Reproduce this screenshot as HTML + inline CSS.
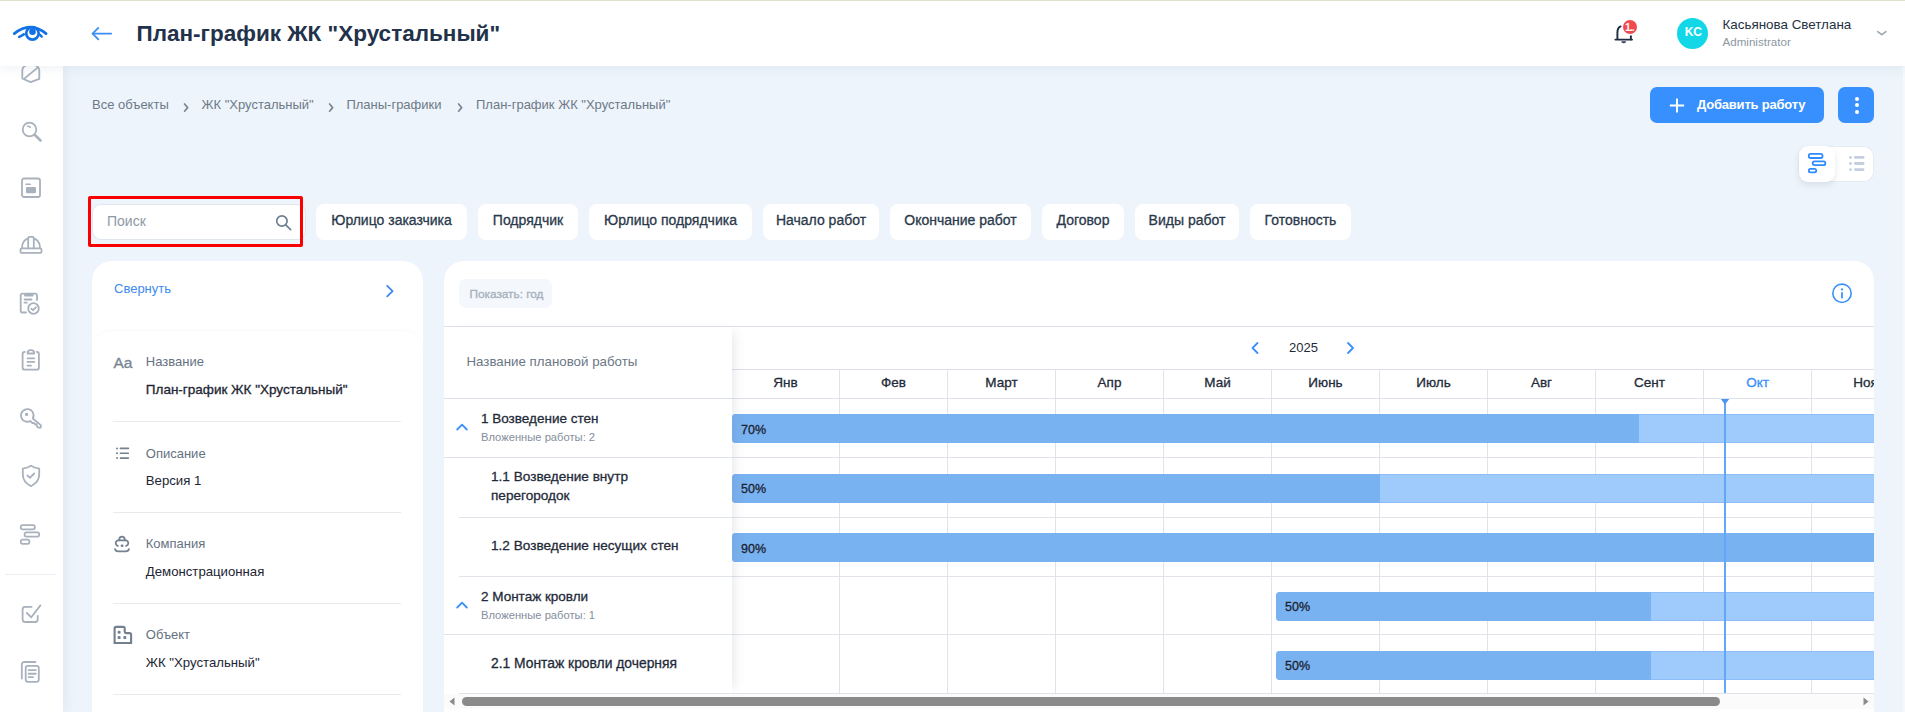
<!DOCTYPE html>
<html><head><meta charset="utf-8"><title>План-график</title>
<style>
*{box-sizing:border-box;margin:0;padding:0;}
html,body{width:1905px;height:712px;overflow:hidden;}
body{background:#edf4fb;font-family:"Liberation Sans",sans-serif;position:relative;}
.t{position:absolute;white-space:nowrap;line-height:1;}
.r{position:absolute;}
svg.r{overflow:visible;}
</style></head><body>
<div class="t" style="left:92.00px;top:97.90px;font-size:13px;color:#6e7a88;font-weight:normal;">Все объекты</div>
<div class="t" style="left:201.50px;top:97.90px;font-size:13px;color:#6e7a88;font-weight:normal;">ЖК "Хрустальный"</div>
<div class="t" style="left:346.40px;top:97.90px;font-size:13px;color:#6e7a88;font-weight:normal;">Планы-графики</div>
<div class="t" style="left:476.00px;top:97.90px;font-size:13px;color:#6e7a88;font-weight:normal;">План-график ЖК "Хрустальный"</div>
<svg class="r" style="left:183px;top:101px;" width="7" height="11" viewBox="0 0 7 11"><polyline points="1.6,3 4.6,6.6 1.6,10.2" fill="none" stroke="#7b8796" stroke-width="1.7" stroke-linecap="round" stroke-linejoin="round"/></svg>
<svg class="r" style="left:328px;top:101px;" width="7" height="11" viewBox="0 0 7 11"><polyline points="1.6,3 4.6,6.6 1.6,10.2" fill="none" stroke="#7b8796" stroke-width="1.7" stroke-linecap="round" stroke-linejoin="round"/></svg>
<svg class="r" style="left:457px;top:101px;" width="7" height="11" viewBox="0 0 7 11"><polyline points="1.6,3 4.6,6.6 1.6,10.2" fill="none" stroke="#7b8796" stroke-width="1.7" stroke-linecap="round" stroke-linejoin="round"/></svg>
<div class="r" style="left:1650px;top:87px;width:174px;height:36px;background:#388ffe;border-radius:7px;"></div>
<svg class="r" style="left:1669px;top:98px;" width="16" height="15" viewBox="0 0 16 15"><path d="M8 0.5V14.5M0.9 7.5H15.1" stroke="#fff" stroke-width="1.9" fill="none"/></svg>
<div class="t" style="left:1697.00px;top:97.70px;font-size:13px;color:#fff;font-weight:bold;letter-spacing:-0.2px;">Добавить работу</div>
<div class="r" style="left:1838px;top:87px;width:36px;height:36px;background:#388ffe;border-radius:7px;"></div>
<div class="r" style="left:1854.6000000000001px;top:96.9px;width:4.2px;height:4.2px;border-radius:50%;background:#fff"></div>
<div class="r" style="left:1854.6000000000001px;top:103.2px;width:4.2px;height:4.2px;border-radius:50%;background:#fff"></div>
<div class="r" style="left:1854.6000000000001px;top:109.5px;width:4.2px;height:4.2px;border-radius:50%;background:#fff"></div>
<div class="r" style="left:1799px;top:147px;width:74px;height:34px;background:#fff;border-radius:9px;box-shadow:0 0 0 1px rgba(225,230,238,0.6);"></div>
<div class="r" style="left:1799px;top:146px;width:36px;height:36px;background:#fff;border-radius:9px;box-shadow:0 3px 6px rgba(120,130,150,0.18);"></div>
<svg class="r" style="left:1805px;top:150px;" width="25" height="26" viewBox="0 0 25 26"><g fill="none" stroke="#2f8bff" stroke-width="1.8"><rect x="3.8" y="3.9" width="13.7" height="4.1" rx="1.8"/><rect x="7.7" y="11.4" width="12.6" height="3.8" rx="1.7"/><rect x="3.8" y="18.9" width="7.4" height="3.4" rx="1.6"/></g></svg>
<svg class="r" style="left:1846px;top:152px;" width="22" height="22" viewBox="0 0 22 22"><g fill="#c3cfdf"><circle cx="4.5" cy="5.4" r="1.4"/><circle cx="4.5" cy="11.5" r="1.4"/><circle cx="4.5" cy="17.6" r="1.4"/><rect x="8" y="4" width="10.5" height="2.8" rx="1.4"/><rect x="8" y="10.1" width="10.5" height="2.8" rx="1.4"/><rect x="8" y="16.2" width="10.5" height="2.8" rx="1.4"/></g></svg>
<div class="r" style="left:93px;top:205px;width:212px;height:34px;background:#fff;border-radius:8px;box-shadow:0 0 0 1px rgba(215,220,226,0.6);"></div>
<div class="t" style="left:107.00px;top:214.15px;font-size:14px;color:#8d98a5;font-weight:normal;">Поиск</div>
<svg class="r" style="left:268px;top:205px;" width="30" height="30" viewBox="0 0 30 30"><circle cx="13.9" cy="16" r="5.2" fill="none" stroke="#6d7f92" stroke-width="1.7"/><path d="M17.7 19.8L22.6 24.6" stroke="#6d7f92" stroke-width="1.7" stroke-linecap="round"/></svg>
<div class="r" style="left:88px;top:196px;width:215px;height:51px;border:3px solid #fb0000;border-radius:2px;"></div>
<div class="r" style="left:316px;top:204px;width:151px;height:36px;background:#fff;border-radius:8px;"></div>
<div class="t" style="left:241.50px;width:300px;text-align:center;top:213.35px;font-size:14px;color:#2b394b;font-weight:normal;-webkit-text-stroke:0.3px currentColor;">Юрлицо заказчика</div>
<div class="r" style="left:478px;top:204px;width:100px;height:36px;background:#fff;border-radius:8px;"></div>
<div class="t" style="left:378.00px;width:300px;text-align:center;top:213.35px;font-size:14px;color:#2b394b;font-weight:normal;-webkit-text-stroke:0.3px currentColor;">Подрядчик</div>
<div class="r" style="left:589px;top:204px;width:163px;height:36px;background:#fff;border-radius:8px;"></div>
<div class="t" style="left:520.50px;width:300px;text-align:center;top:213.35px;font-size:14px;color:#2b394b;font-weight:normal;-webkit-text-stroke:0.3px currentColor;">Юрлицо подрядчика</div>
<div class="r" style="left:763px;top:204px;width:116px;height:36px;background:#fff;border-radius:8px;"></div>
<div class="t" style="left:671.00px;width:300px;text-align:center;top:213.35px;font-size:14px;color:#2b394b;font-weight:normal;-webkit-text-stroke:0.3px currentColor;">Начало работ</div>
<div class="r" style="left:890px;top:204px;width:141px;height:36px;background:#fff;border-radius:8px;"></div>
<div class="t" style="left:810.50px;width:300px;text-align:center;top:213.35px;font-size:14px;color:#2b394b;font-weight:normal;-webkit-text-stroke:0.3px currentColor;">Окончание работ</div>
<div class="r" style="left:1042px;top:204px;width:82px;height:36px;background:#fff;border-radius:8px;"></div>
<div class="t" style="left:933.00px;width:300px;text-align:center;top:213.35px;font-size:14px;color:#2b394b;font-weight:normal;-webkit-text-stroke:0.3px currentColor;">Договор</div>
<div class="r" style="left:1135px;top:204px;width:104px;height:36px;background:#fff;border-radius:8px;"></div>
<div class="t" style="left:1037.00px;width:300px;text-align:center;top:213.35px;font-size:14px;color:#2b394b;font-weight:normal;-webkit-text-stroke:0.3px currentColor;">Виды работ</div>
<div class="r" style="left:1250px;top:204px;width:101px;height:36px;background:#fff;border-radius:8px;"></div>
<div class="t" style="left:1150.50px;width:300px;text-align:center;top:213.35px;font-size:14px;color:#2b394b;font-weight:normal;-webkit-text-stroke:0.3px currentColor;">Готовность</div>
<div class="r" style="left:92px;top:261px;width:331px;height:460px;background:#fff;border-radius:20px;"></div>
<div class="r" style="left:92px;top:331px;width:331px;height:400px;background:#fff;border-radius:20px 20px 0 0;box-shadow:0 -1px 2px rgba(150,160,180,0.05);"></div>
<div class="t" style="left:114.00px;top:282.20px;font-size:13px;color:#3d8af0;font-weight:normal;">Свернуть</div>
<svg class="r" style="left:383px;top:283px;" width="14" height="16" viewBox="0 0 14 16"><polyline points="4.2,2.8 9.6,8.1 4.2,13.4" fill="none" stroke="#3d8af0" stroke-width="1.8" stroke-linecap="round" stroke-linejoin="round"/></svg>
<div class="t" style="left:113.50px;top:354.78px;font-size:15.5px;color:#7a8794;font-weight:normal;-webkit-text-stroke:0.35px currentColor;">Aa</div>
<div class="t" style="left:145.80px;top:355.30px;font-size:13px;color:#657181;font-weight:normal;">Название</div>
<div class="t" style="left:145.80px;top:382.57px;font-size:13.5px;color:#1c2533;font-weight:normal;-webkit-text-stroke:0.3px currentColor;">План-график ЖК "Хрустальный"</div>
<div class="t" style="left:145.80px;top:446.50px;font-size:13px;color:#657181;font-weight:normal;">Описание</div>
<div class="t" style="left:145.80px;top:473.83px;font-size:13.2px;color:#1c2533;font-weight:normal;">Версия 1</div>
<div class="t" style="left:145.80px;top:537.30px;font-size:13px;color:#657181;font-weight:normal;">Компания</div>
<div class="t" style="left:145.80px;top:564.83px;font-size:13.2px;color:#1c2533;font-weight:normal;">Демонстрационная</div>
<div class="t" style="left:145.80px;top:628.20px;font-size:13px;color:#657181;font-weight:normal;">Объект</div>
<div class="t" style="left:145.80px;top:655.83px;font-size:13.2px;color:#1c2533;font-weight:normal;">ЖК "Хрустальный"</div>
<div class="r" style="left:113px;top:421px;width:288px;height:1px;background:#e8eaed;"></div>
<div class="r" style="left:113px;top:512px;width:288px;height:1px;background:#e8eaed;"></div>
<div class="r" style="left:113px;top:603px;width:288px;height:1px;background:#e8eaed;"></div>
<div class="r" style="left:113px;top:694px;width:288px;height:1px;background:#e8eaed;"></div>
<svg class="r" style="left:114px;top:445px;" width="18" height="16" viewBox="0 0 18 16"><g fill="#73808e"><circle cx="3" cy="3.5" r="1"/><circle cx="3" cy="8.3" r="1"/><circle cx="3" cy="13.1" r="1"/><rect x="5.6" y="2.6" width="9.6" height="1.7" rx=".8"/><rect x="5.6" y="7.4" width="9.6" height="1.7" rx=".8"/><rect x="5.6" y="12.2" width="9.6" height="1.7" rx=".8"/></g></svg>
<svg class="r" style="left:112px;top:534px;" width="20" height="20" viewBox="0 0 20 20"><g fill="none" stroke="#73808e" stroke-width="1.8" stroke-linecap="round"><path d="M7.3 6.3V5.4a2.7 2.7 0 0 1 5.4 0v0.9"/><path d="M5.9 11.9H5.6a3 3 0 0 1 0-5.6h8.8a3 3 0 0 1 0 5.6h-0.3"/><path d="M3 15.1Q3.6 17.4 6.2 17.4H13.8Q16.4 17.4 17 15.1"/></g><rect x="8.7" y="10.5" width="2.8" height="2.6" rx="1" fill="#73808e"/></svg>
<svg class="r" style="left:112px;top:624px;" width="22" height="22" viewBox="0 0 22 22"><g fill="none" stroke="#73808e" stroke-width="2.1"><path d="M2.6 19V4.4a1.5 1.5 0 0 1 1.5-1.5h7.1a1.5 1.5 0 0 1 1.5 1.5v3.4a1.3 1.3 0 0 0 1.3 1.3h3.6a1.5 1.5 0 0 1 1.5 1.5V19z"/></g><g fill="#73808e"><rect x="5.6" y="6.7" width="3" height="3" rx="1.2"/><rect x="5.6" y="12.1" width="3" height="3" rx="1.2"/><rect x="11.3" y="12.1" width="3" height="3" rx="1.2"/></g></svg>
<div class="r" style="left:444px;top:261px;width:1430px;height:460px;background:#fff;border-radius:20px 20px 0 0;"></div>
<div class="r" style="left:459px;top:279px;width:93px;height:29px;background:#f4f8fc;border-radius:7px;"></div>
<div class="t" style="left:469.50px;top:288.51px;font-size:11.8px;color:#a8b1bc;font-weight:normal;-webkit-text-stroke:0.35px currentColor;">Показать: год</div>
<svg class="r" style="left:1830px;top:281px;" width="25" height="25" viewBox="0 0 25 25"><circle cx="12" cy="12.3" r="9.2" fill="none" stroke="#3990fc" stroke-width="1.6"/><circle cx="12" cy="8.4" r="1.1" fill="#3990fc"/><path d="M12 11.2V17.2" stroke="#3990fc" stroke-width="1.8"/></svg>
<div class="r" style="left:444px;top:326px;width:1430px;height:1px;background:#dde2ea;"></div>
<div class="t" style="left:1289.00px;top:340.80px;font-size:13px;color:#1f2b3a;font-weight:normal;">2025</div>
<svg class="r" style="left:1248px;top:340px;" width="14" height="16" viewBox="0 0 14 16"><polyline points="9.5,3 4.5,8 9.5,13" fill="none" stroke="#3990fc" stroke-width="1.8" stroke-linecap="round" stroke-linejoin="round"/></svg>
<svg class="r" style="left:1344px;top:340px;" width="14" height="16" viewBox="0 0 14 16"><polyline points="4,3 9,8 4,13" fill="none" stroke="#3990fc" stroke-width="1.8" stroke-linecap="round" stroke-linejoin="round"/></svg>
<div class="r" style="left:732px;top:369px;width:1142px;height:1px;background:#dde0e8;"></div>
<div class="r" style="left:839px;top:369px;width:1px;height:325px;background:#e1e3ea;"></div>
<div class="r" style="left:947px;top:369px;width:1px;height:325px;background:#e1e3ea;"></div>
<div class="r" style="left:1055px;top:369px;width:1px;height:325px;background:#e1e3ea;"></div>
<div class="r" style="left:1163px;top:369px;width:1px;height:325px;background:#e1e3ea;"></div>
<div class="r" style="left:1271px;top:369px;width:1px;height:325px;background:#e1e3ea;"></div>
<div class="r" style="left:1379px;top:369px;width:1px;height:325px;background:#e1e3ea;"></div>
<div class="r" style="left:1487px;top:369px;width:1px;height:325px;background:#e1e3ea;"></div>
<div class="r" style="left:1595px;top:369px;width:1px;height:325px;background:#e1e3ea;"></div>
<div class="r" style="left:1703px;top:369px;width:1px;height:325px;background:#e1e3ea;"></div>
<div class="r" style="left:1811px;top:369px;width:1px;height:325px;background:#e1e3ea;"></div>
<div class="t" style="left:735.50px;width:100px;text-align:center;top:375.87px;font-size:13.5px;color:#1f2b3a;font-weight:normal;-webkit-text-stroke:0.3px currentColor;">Янв</div>
<div class="t" style="left:843.50px;width:100px;text-align:center;top:375.87px;font-size:13.5px;color:#1f2b3a;font-weight:normal;-webkit-text-stroke:0.3px currentColor;">Фев</div>
<div class="t" style="left:951.50px;width:100px;text-align:center;top:375.87px;font-size:13.5px;color:#1f2b3a;font-weight:normal;-webkit-text-stroke:0.3px currentColor;">Март</div>
<div class="t" style="left:1059.50px;width:100px;text-align:center;top:375.87px;font-size:13.5px;color:#1f2b3a;font-weight:normal;-webkit-text-stroke:0.3px currentColor;">Апр</div>
<div class="t" style="left:1167.50px;width:100px;text-align:center;top:375.87px;font-size:13.5px;color:#1f2b3a;font-weight:normal;-webkit-text-stroke:0.3px currentColor;">Май</div>
<div class="t" style="left:1275.50px;width:100px;text-align:center;top:375.87px;font-size:13.5px;color:#1f2b3a;font-weight:normal;-webkit-text-stroke:0.3px currentColor;">Июнь</div>
<div class="t" style="left:1383.50px;width:100px;text-align:center;top:375.87px;font-size:13.5px;color:#1f2b3a;font-weight:normal;-webkit-text-stroke:0.3px currentColor;">Июль</div>
<div class="t" style="left:1491.50px;width:100px;text-align:center;top:375.87px;font-size:13.5px;color:#1f2b3a;font-weight:normal;-webkit-text-stroke:0.3px currentColor;">Авг</div>
<div class="t" style="left:1599.50px;width:100px;text-align:center;top:375.87px;font-size:13.5px;color:#1f2b3a;font-weight:normal;-webkit-text-stroke:0.3px currentColor;">Сент</div>
<div class="t" style="left:1707.50px;width:100px;text-align:center;top:375.87px;font-size:13.5px;color:#3990fc;font-weight:normal;-webkit-text-stroke:0.3px currentColor;">Окт</div>
<div class="t" style="left:1815.50px;width:100px;text-align:center;top:375.87px;font-size:13.5px;color:#1f2b3a;font-weight:normal;-webkit-text-stroke:0.3px currentColor;">Ноя</div>
<div class="r" style="left:732px;top:398px;width:1142px;height:1px;background:#e1e3ea;"></div>
<div class="r" style="left:732px;top:457px;width:1142px;height:1px;background:#e1e3ea;"></div>
<div class="r" style="left:732px;top:517px;width:1142px;height:1px;background:#e1e3ea;"></div>
<div class="r" style="left:732px;top:576px;width:1142px;height:1px;background:#e1e3ea;"></div>
<div class="r" style="left:732px;top:634px;width:1142px;height:1px;background:#e1e3ea;"></div>
<div class="r" style="left:732px;top:693px;width:1142px;height:1px;background:#e1e3ea;"></div>
<div class="r" style="left:732px;top:414px;width:1142px;height:29px;background:#9fcbfc;border-radius:4px 0 0 4px;border-top:1px solid #8dbdf6;border-bottom:1px solid #8dbdf6;"></div>
<div class="r" style="left:732px;top:414px;width:907px;height:29px;background:#79b2f0;border-radius:4px 0 0 4px;"></div>
<div class="t" style="left:741.00px;top:423.82px;font-size:12.5px;color:#1c2230;font-weight:normal;-webkit-text-stroke:0.3px currentColor;">70%</div>
<div class="r" style="left:732px;top:474px;width:1142px;height:29px;background:#9fcbfc;border-radius:4px 0 0 4px;border-top:1px solid #8dbdf6;border-bottom:1px solid #8dbdf6;"></div>
<div class="r" style="left:732px;top:474px;width:647.5px;height:29px;background:#79b2f0;border-radius:4px 0 0 4px;"></div>
<div class="t" style="left:741.00px;top:482.82px;font-size:12.5px;color:#1c2230;font-weight:normal;-webkit-text-stroke:0.3px currentColor;">50%</div>
<div class="r" style="left:732px;top:533px;width:1142px;height:29px;background:#9fcbfc;border-radius:4px 0 0 4px;border-top:1px solid #8dbdf6;border-bottom:1px solid #8dbdf6;"></div>
<div class="r" style="left:732px;top:533px;width:1142px;height:29px;background:#79b2f0;border-radius:4px 0 0 4px;"></div>
<div class="t" style="left:741.00px;top:542.82px;font-size:12.5px;color:#1c2230;font-weight:normal;-webkit-text-stroke:0.3px currentColor;">90%</div>
<div class="r" style="left:1276px;top:592px;width:598px;height:29px;background:#9fcbfc;border-radius:4px 0 0 4px;border-top:1px solid #8dbdf6;border-bottom:1px solid #8dbdf6;"></div>
<div class="r" style="left:1276px;top:592px;width:375px;height:29px;background:#79b2f0;border-radius:4px 0 0 4px;"></div>
<div class="t" style="left:1285.00px;top:600.82px;font-size:12.5px;color:#1c2230;font-weight:normal;-webkit-text-stroke:0.3px currentColor;">50%</div>
<div class="r" style="left:1276px;top:651px;width:598px;height:29px;background:#9fcbfc;border-radius:4px 0 0 4px;border-top:1px solid #8dbdf6;border-bottom:1px solid #8dbdf6;"></div>
<div class="r" style="left:1276px;top:651px;width:375px;height:29px;background:#79b2f0;border-radius:4px 0 0 4px;"></div>
<div class="t" style="left:1285.00px;top:659.82px;font-size:12.5px;color:#1c2230;font-weight:normal;-webkit-text-stroke:0.3px currentColor;">50%</div>
<div class="r" style="left:1724px;top:400px;width:2px;height:293px;background:#62a6f8;"></div>
<svg class="r" style="left:1720px;top:398px;" width="10" height="7" viewBox="0 0 10 7"><polygon points="0.8,1 9.2,1 5,6.5" fill="#4a94f4"/></svg>
<div class="r" style="left:444px;top:327px;width:288px;height:366px;background:#fff;box-shadow:7px 0 10px -5px rgba(100,110,140,0.16);"></div>
<div class="r" style="left:444px;top:398px;width:288px;height:1px;background:#dde0e8;"></div>
<div class="t" style="left:466.50px;top:354.74px;font-size:13.3px;color:#6b7785;font-weight:normal;">Название плановой работы</div>
<div class="r" style="left:444px;top:457px;width:288px;height:1px;background:#e1e3ea;"></div>
<div class="r" style="left:459px;top:517px;width:273px;height:1px;background:#e1e3ea;"></div>
<div class="r" style="left:459px;top:576px;width:273px;height:1px;background:#e1e3ea;"></div>
<div class="r" style="left:444px;top:634px;width:288px;height:1px;background:#e1e3ea;"></div>
<div class="r" style="left:459px;top:693px;width:273px;height:1px;background:#e1e3ea;"></div>
<svg class="r" style="left:455px;top:422px;" width="14" height="10" viewBox="0 0 14 10"><polyline points="2.2,7.5 7,2.7 11.8,7.5" fill="none" stroke="#3990fc" stroke-width="1.8" stroke-linecap="round" stroke-linejoin="round"/></svg>
<div class="t" style="left:481.00px;top:411.67px;font-size:13.5px;color:#1f2b3a;font-weight:normal;-webkit-text-stroke:0.3px currentColor;">1 Возведение стен</div>
<div class="t" style="left:481.00px;top:432.12px;font-size:11.2px;color:#838e9b;font-weight:normal;">Вложенные работы: 2</div>
<div class="t" style="left:491.00px;top:470.09px;font-size:13.6px;color:#1f2b3a;font-weight:normal;-webkit-text-stroke:0.3px currentColor;">1.1 Возведение внутр</div>
<div class="t" style="left:491.00px;top:488.99px;font-size:13.6px;color:#1f2b3a;font-weight:normal;-webkit-text-stroke:0.3px currentColor;">перегородок</div>
<div class="t" style="left:491.00px;top:538.99px;font-size:13.6px;color:#1f2b3a;font-weight:normal;-webkit-text-stroke:0.3px currentColor;">1.2 Возведение несущих стен</div>
<svg class="r" style="left:455px;top:600px;" width="14" height="10" viewBox="0 0 14 10"><polyline points="2.2,7.5 7,2.7 11.8,7.5" fill="none" stroke="#3990fc" stroke-width="1.8" stroke-linecap="round" stroke-linejoin="round"/></svg>
<div class="t" style="left:481.00px;top:590.37px;font-size:13.5px;color:#1f2b3a;font-weight:normal;-webkit-text-stroke:0.3px currentColor;">2 Монтаж кровли</div>
<div class="t" style="left:481.00px;top:609.92px;font-size:11.2px;color:#838e9b;font-weight:normal;">Вложенные работы: 1</div>
<div class="t" style="left:491.00px;top:656.88px;font-size:13.85px;color:#1f2b3a;font-weight:normal;-webkit-text-stroke:0.3px currentColor;">2.1 Монтаж кровли дочерняя</div>
<div class="r" style="left:444px;top:694px;width:1430px;height:15px;background:#fbfbfb;"></div>
<div class="r" style="left:444px;top:709px;width:1430px;height:3px;background:#fff;"></div>
<div class="r" style="left:444px;top:693px;width:15px;height:1px;background:#fff;"></div>
<div class="r" style="left:1874px;top:327px;width:28px;height:385px;background:#edf4fb;"></div>
<div class="r" style="left:462px;top:697px;width:1258px;height:9px;background:#8a8a8a;border-radius:4.5px;"></div>
<svg class="r" style="left:448px;top:696px;" width="8" height="11" viewBox="0 0 8 11"><polygon points="6.5,1.5 6.5,9.5 1.5,5.5" fill="#8a8a8a"/></svg>
<svg class="r" style="left:1862px;top:696px;" width="8" height="11" viewBox="0 0 8 11"><polygon points="1.5,1.5 1.5,9.5 6.5,5.5" fill="#8a8a8a"/></svg>
<div class="r" style="left:1903px;top:66px;width:2px;height:646px;background:#f7f8fa;"></div>
<div class="r" style="left:0px;top:0px;width:1905px;height:66px;background:#fff;box-shadow:0 3px 10px rgba(100,120,150,0.09);z-index:5;"></div>
<div class="r" style="left:0px;top:0px;width:1905px;height:1px;background:#e0dfcc;z-index:6;"></div>
<svg class="r" style="left:8px;top:18px;z-index:7;" width="46" height="30" viewBox="0 0 46 30"><g fill="none" stroke="#1371e6" stroke-linecap="round"><path d="M6.3 15.6Q22.2 2.6 38.1 15.6" stroke-width="2.7"/><path d="M11.2 19L15.8 16.3" stroke-width="2.6"/><path d="M33.7 18.6L32 16.8" stroke-width="2.4"/><circle cx="24.45" cy="15.35" r="6.25" stroke-width="2.7"/></g><circle cx="24.5" cy="13.7" r="3.3" fill="#1371e6"/></svg>
<svg class="r" style="left:88px;top:24px;z-index:7;" width="28" height="20" viewBox="0 0 28 20"><g fill="none" stroke="#3b8ef5" stroke-width="1.8" stroke-linecap="round" stroke-linejoin="round"><path d="M4.6 9.6H23.2"/><path d="M10.3 3.9L4.6 9.6L10.3 15.3"/></g></svg>
<div class="t" style="left:136.50px;top:22.65px;font-size:22.5px;color:#22324a;font-weight:bold;z-index:7;">План-график ЖК "Хрустальный"</div>
<svg class="r" style="left:1610px;top:20px;z-index:7;" width="28" height="28" viewBox="0 0 28 28"><g fill="none" stroke="#1f2d40" stroke-width="1.9" stroke-linecap="round"><path d="M7.4 19V12.5C7.4 9.3 8.6 7.3 10.6 6.4"/><path d="M5.4 19.6H22"/><path d="M20.9 16.2V19.4"/></g><path d="M11.2 21.3h5a2.5 1.9 0 0 1-5 0z" fill="#3a4656"/></svg>
<div class="r" style="left:1622.8px;top:20px;width:14.4px;height:14.4px;border-radius:50%;background:#f14a4e;z-index:8;"></div>
<div class="t" style="left:1625.00px;top:21.91px;font-size:10.5px;color:#fff;font-weight:bold;z-index:9;letter-spacing:-1px;">1..</div>
<div class="r" style="left:1677px;top:18px;width:31px;height:31px;border-radius:50%;background:#12d7e7;z-index:7;"></div>
<div class="t" style="left:1673.20px;width:40px;text-align:center;top:26.04px;font-size:12px;color:#fff;font-weight:bold;z-index:8;letter-spacing:-0.3px;">KC</div>
<div class="t" style="left:1722.50px;top:17.56px;font-size:13.4px;color:#243142;font-weight:normal;z-index:7;">Касьянова Светлана</div>
<div class="t" style="left:1722.50px;top:35.98px;font-size:11.6px;color:#8c97a3;font-weight:normal;z-index:7;">Administrator</div>
<svg class="r" style="left:1874px;top:27px;z-index:7;" width="16" height="12" viewBox="0 0 16 12"><polyline points="3.7,4.6 7.8,7.7 11.9,4.6" fill="none" stroke="#9aa4b0" stroke-width="1.5" stroke-linecap="round" stroke-linejoin="round"/></svg>
<div class="r" style="left:0px;top:66px;width:63px;height:646px;background:#fff;box-shadow:2px 0 10px rgba(100,120,150,0.10);z-index:4;"></div>
<svg class="r" style="left:15.5px;top:57.5px;z-index:4;" width="30" height="30" viewBox="0 0 30 30"><g fill="none" stroke="#a9b1bc" stroke-width="1.8" stroke-linecap="round" stroke-linejoin="round"><path d="M6.3 20.5V12.6A5.6 5.6 0 0 1 11.9 7H17.7A5.6 5.6 0 0 1 23.3 12.6V20.8L14.6 24.1Z"/><path d="M8.6 20.4L21.4 9.9"/></g></svg>
<svg class="r" style="left:15.5px;top:116px;z-index:4;" width="30" height="30" viewBox="0 0 30 30"><g fill="none" stroke="#a9b1bc" stroke-width="1.8" stroke-linecap="round" stroke-linejoin="round"><circle cx="13.5" cy="13.5" r="6.8"/><path d="M19 19L24.5 24.5" stroke-width="2.6"/><path d="M11.5 10.3A3.5 3.5 0 0 1 14.3 11.3" stroke-width="1.5"/></g></svg>
<svg class="r" style="left:15.5px;top:173px;z-index:4;" width="30" height="30" viewBox="0 0 30 30"><g fill="none" stroke="#a9b1bc" stroke-width="1.8" stroke-linecap="round" stroke-linejoin="round"><rect x="6" y="5.5" width="18" height="18.5" rx="2"/><path d="M10 11.3H14.3" stroke-width="1.5"/><rect x="10" y="14" width="10" height="6.2" rx="1.2" fill="#a9b1bc" stroke="none"/></g></svg>
<svg class="r" style="left:15.5px;top:230px;z-index:4;" width="30" height="30" viewBox="0 0 30 30"><g fill="none" stroke="#a9b1bc" stroke-width="1.8" stroke-linecap="round" stroke-linejoin="round"><path d="M6.1 18.2V17.5C6.1 12.8 8.8 9.6 12.2 8.4"/><path d="M23.9 18.2V17.5C23.9 12.8 21.2 9.6 17.8 8.4"/><path d="M12.2 18.4V8.4A1.5 1.5 0 0 1 13.7 6.9H16.3A1.5 1.5 0 0 1 17.8 8.4V18.4"/><path d="M5.6 18.4H24.4A1.1 1.1 0 0 1 25.5 19.5V21.7A1.1 1.1 0 0 1 24.4 22.8H5.6A1.1 1.1 0 0 1 4.5 21.7V19.5A1.1 1.1 0 0 1 5.6 18.4Z"/></g></svg>
<svg class="r" style="left:14.3px;top:288.6px;z-index:4;" width="30" height="30" viewBox="0 0 30 30"><g fill="none" stroke="#a9b1bc" stroke-width="1.8" stroke-linecap="round" stroke-linejoin="round"><path d="M12 23.5H8.5A1.8 1.8 0 0 1 6.7 21.7V6.5A1.8 1.8 0 0 1 8.5 4.7H21.2A1.8 1.8 0 0 1 23 6.5V11"/><path d="M11 5H18.5V6.5H11Z" fill="#a9b1bc"/><path d="M10.5 10.5H17.5"/><path d="M10.5 13.7H12.8"/><circle cx="19.5" cy="19.5" r="5.3"/><path d="M17.3 19.6L19 21.2L21.9 18.3"/></g></svg>
<svg class="r" style="left:15.5px;top:345px;z-index:4;" width="30" height="30" viewBox="0 0 30 30"><g fill="none" stroke="#a9b1bc" stroke-width="1.8" stroke-linecap="round" stroke-linejoin="round"><path d="M8.8 6.9A2.3 2.3 0 0 0 6.6 9.2V22.4A2.3 2.3 0 0 0 8.9 24.7H20.6A2.3 2.3 0 0 0 22.9 22.4V9.2A2.3 2.3 0 0 0 20.7 6.9"/><path d="M11.6 8.5V7.9A2.8 2.8 0 0 1 14.4 5.1H15.3A2.8 2.8 0 0 1 18.1 7.9V8.5Z"/><path d="M11.5 13.3H18.3M11.5 16.9H18.3M11.5 20.6H15"/></g></svg>
<svg class="r" style="left:15.5px;top:403px;z-index:4;" width="30" height="30" viewBox="0 0 30 30"><g fill="none" stroke="#a9b1bc" stroke-width="1.8" stroke-linecap="round" stroke-linejoin="round"><path d="M16.8 15.5A6.3 6.3 0 1 0 14.2 18L16.4 20.2L17.8 19.9L19.1 21.4L20.6 21.2L20.8 23.2L22.2 24.6H24.8V22.1Z"/><circle cx="10.6" cy="11.4" r="0.9" fill="#a9b1bc" stroke-width="1.6"/></g></svg>
<svg class="r" style="left:15.5px;top:461px;z-index:4;" width="30" height="30" viewBox="0 0 30 30"><g fill="none" stroke="#a9b1bc" stroke-width="1.8" stroke-linecap="round" stroke-linejoin="round"><path d="M15 4.6C13 6.3 10.5 7.2 6.8 7.6V13.6C6.8 19.2 10.2 22.8 15 25.2C19.8 22.8 23.2 19.2 23.2 13.6V7.6C19.5 7.2 17 6.3 15 4.6Z"/><path d="M11.3 14.4L13.9 16.8L18.2 12.5"/></g></svg>
<svg class="r" style="left:13.8px;top:517.2px;z-index:4;" width="30" height="30" viewBox="0 0 30 30"><g fill="none" stroke="#a9b1bc" stroke-width="1.8" stroke-linecap="round" stroke-linejoin="round"><rect x="6.8" y="8.2" width="14" height="4.2" rx="1.8"/><rect x="10.6" y="15.4" width="14.6" height="4.2" rx="1.8"/><rect x="6.8" y="22.6" width="8.6" height="4.2" rx="1.8"/></g></svg>
<div class="r" style="left:5px;top:574px;width:51px;height:1px;background:#eceef2;z-index:4;"></div>
<svg class="r" style="left:15.5px;top:599px;z-index:4;" width="30" height="30" viewBox="0 0 30 30"><g fill="none" stroke="#a9b1bc" stroke-width="1.8" stroke-linecap="round" stroke-linejoin="round"><path d="M15.6 7.9H9.1A2.5 2.5 0 0 0 6.6 10.4V20.5A2.5 2.5 0 0 0 9.1 23H19.2A2.5 2.5 0 0 0 21.7 20.5V16.9"/><path d="M10.8 14L15.3 18.3L24.4 6.4"/></g></svg>
<svg class="r" style="left:15.5px;top:657px;z-index:4;" width="30" height="30" viewBox="0 0 30 30"><g fill="none" stroke="#a9b1bc" stroke-width="1.8" stroke-linecap="round" stroke-linejoin="round"><path d="M19.5 5H8.3A2.5 2.5 0 0 0 5.8 7.5V21.5"/><rect x="9.7" y="8.9" width="13.1" height="15.9" rx="2.2"/><path d="M12.6 13.1H19.8M12.6 16.75H19.8M12.6 20.1H17"/></g></svg>
</body></html>
